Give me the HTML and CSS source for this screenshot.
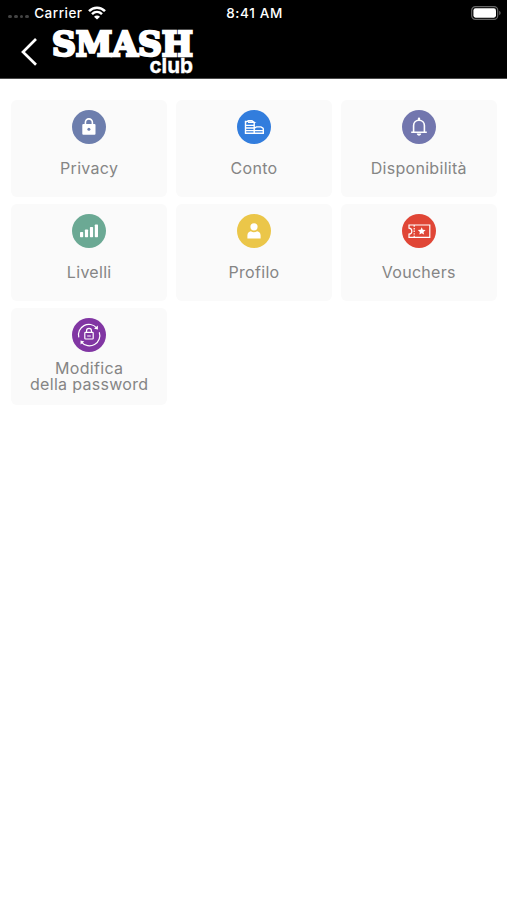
FILE: index.html
```html
<!DOCTYPE html>
<html lang="it">
<head>
<meta charset="utf-8">
<title>Smash Club</title>
<link rel="stylesheet" href="styles.css">
</head>
<body>
<header class="header">
  <div class="status">
    <div class="carrier">
      <span class="dots"><i></i><i></i><i></i><i></i></span>
      <span>Carrier</span>
      <svg class="wifi" width="18" height="14" viewBox="0 0 18 14" fill="none" stroke="#fff" stroke-width="2.5"><path d="M1 5.1C5.5.5 12.5.5 17 5.1M4 8.2c2.9-2.8 7.1-2.8 10 0"/><path d="M9 13.6 6 10.7c1.7-1.6 4.3-1.6 6 0z" fill="#fff" stroke="none"/></svg>
    </div>
    <time class="clock">8:41 AM</time>
    <svg class="battery" width="30" height="14" viewBox="0 0 30 14"><rect x=".7" y=".7" width="26" height="12.6" rx="3.6" fill="none" stroke="#666" stroke-width="1.2"/><rect x="2.4" y="2.3" width="22.6" height="9.4" rx="2.1" fill="#fff"/><path d="M28.3 4.8c1.7.7 1.7 3.7 0 4.4z" fill="#777"/></svg>
  </div>
  <div class="nav">
    <svg class="back" width="18" height="28" viewBox="0 0 18 28" fill="none" stroke="#fff" stroke-width="2.7"><path d="M16 1 3 14l13 12.7"/></svg>
    <svg class="logo" width="144" height="48" viewBox="0 0 144 48">
      <text class="smash" x="1" y="25.8" textLength="141" lengthAdjust="spacingAndGlyphs">SMASH</text>
      <text class="club" x="98.5" y="43.4" textLength="43.5" lengthAdjust="spacingAndGlyphs">club</text>
    </svg>
  </div>
</header>
<main class="grid">
  <a class="card">
    <svg class="icon" viewBox="0 0 34 34"><circle cx="17" cy="17" r="17" fill="#6d7ead"/><rect x="10.3" y="14" width="13.2" height="10.8" rx="1" fill="#fff"/><path d="M13.4 14.5v-2.1a3.5 3.5 0 0 1 7 0v2.1" fill="none" stroke="#fff" stroke-width="1.6"/><circle cx="16.9" cy="19.2" r="1.5" fill="#6d7ead"/></svg>
    <span class="label">Privacy</span>
  </a>
  <a class="card">
    <svg class="icon" viewBox="0 0 34 34"><circle cx="17" cy="17" r="17" fill="#327ddd"/><g fill="none" stroke="#fff" stroke-width="1.4"><path d="M8.5 10.8v12.4h17.8v-5M17.2 12v11M8.5 12.2l3-1.4h3.4l2.3 1.6H11M8.5 15.4h8.5M8.5 18h8.5M8.5 20.6h17.8M17.3 18.2l2.2-1.3h4.4l2.4 1.5"/></g></svg>
    <span class="label">Conto</span>
  </a>
  <a class="card">
    <svg class="icon" viewBox="0 0 34 34"><circle cx="17" cy="17" r="17" fill="#7276ae"/><path d="M9.2 22.2h15.6M11.6 22v-6.4c0-3 2.2-5.3 5.4-5.3s5.4 2.3 5.4 5.3V22" fill="none" stroke="#fff" stroke-width="1.6"/><path d="M15.8 10V8.8a1.2 1.2 0 0 1 2.4 0V10zM14.8 23.6h4.4c0 2.7-4.4 2.7-4.4 0z" fill="#fff"/></svg>
    <span class="label">Disponibilità</span>
  </a>
  <a class="card">
    <svg class="icon" viewBox="0 0 34 34"><circle cx="17" cy="17" r="17" fill="#6ba994"/><g fill="#fff"><rect x="8" y="18.1" width="3.2" height="5.2" rx=".7"/><rect x="12.9" y="15.6" width="3.2" height="7.7" rx=".7"/><rect x="17.9" y="13" width="3.2" height="10.3" rx=".7"/><rect x="22.8" y="10.5" width="3.2" height="12.8" rx=".7"/></g></svg>
    <span class="label">Livelli</span>
  </a>
  <a class="card">
    <svg class="icon" viewBox="0 0 34 34"><circle cx="17" cy="17" r="17" fill="#ebc649"/><circle cx="17" cy="12.8" r="3.6" fill="#fff"/><path d="M10.4 24.6v-3.2c0-2.6 1.6-3.8 3.5-4.1 1.8 1.2 4.4 1.2 6.2 0 1.9.3 3.5 1.5 3.5 4.1v3.2z" fill="#fff"/></svg>
    <span class="label">Profilo</span>
  </a>
  <a class="card">
    <svg class="icon" viewBox="0 0 34 34"><circle cx="17" cy="17" r="17" fill="#e04636"/><path d="M7 11h20.8v12.3H7v-3.2c3.8-.3 3.8-5.6 0-5.9zM12.2 11.3v1.4M12.2 14v1.4M12.2 16.6V18M12.2 19.2v1.4M12.2 21.8v1.4" fill="none" stroke="#fff" stroke-width="1.2"/><path d="m19.7 13.2 1.1 2.6 2.8.2-2.1 1.9.6 2.7-2.4-1.4-2.4 1.4.6-2.7-2.1-1.9 2.8-.2z" fill="#fff"/></svg>
    <span class="label">Vouchers</span>
  </a>
  <a class="card">
    <svg class="icon" viewBox="0 0 34 34"><circle cx="17" cy="17" r="17" fill="#8136a3"/><g fill="none" stroke="#fff" stroke-width="1.2"><path d="M6.8 19.3A10.4 10.4 0 0 1 24.6 9.8M27.3 14.2A10.4 10.4 0 0 1 9.6 24.3"/><rect x="12.8" y="14.4" width="8.4" height="6.6" rx=".8"/><path d="M14.5 14.4v-1.5a2.5 2.5 0 0 1 5 0v1.5M15.2 18h3.6"/></g><path d="m25.8 7.4.2 4-3.9-.6zM8.6 26.6l-.1-4 3.8.8z" fill="#fff"/></svg>
    <span class="label label-two">Modifica<br>della password</span>
  </a>
</main>
</body>
</html>
```

FILE: styles.css
```css
* { box-sizing: border-box; }
body { margin: 0; background: #fff; font-family: Inter, "Liberation Sans", sans-serif; }
.header { height: 79px; background: #000; color: #fff; border-bottom: 1px solid #4a4a4a; }
.status { display: grid; grid-template-columns: 1fr auto 1fr; align-items: center; height: 26px; padding: 0 6px 0 8px; font-size: 13.5px; font-weight: 500; letter-spacing: .5px; }
.clock { letter-spacing: .65px; }
.carrier { display: flex; align-items: center; gap: 5px; }
.dots { display: flex; gap: 2px; padding-top: 7px; }
.dots i { width: 3.8px; height: 3.8px; border-radius: 50%; background: #444; }
.battery { justify-self: end; }
.nav { display: flex; align-items: flex-start; padding-left: 20px; }
.back { margin-top: 12px; }
.logo { margin: 4px 0 0 13px; overflow: visible; }
.smash { font: bold 33px "DejaVu Serif", serif; fill: #fff; stroke: #fff; stroke-width: 2.6px; }
.club { font: 700 20.5px Inter, sans-serif; fill: #fff; stroke: #fff; stroke-width: .3px; }
.grid { display: grid; grid-template-columns: repeat(3, 156px); grid-auto-rows: 97px; gap: 7px 8.8px; padding: 21px 0 0 11.2px; }
.card { display: flex; flex-direction: column; align-items: center; padding-top: 10px; border-radius: 6px; background: #fafafa; color: #858585; }
.icon { width: 34px; height: 34px; flex: none; }
.label { margin-top: 14px; font-size: 16px; line-height: 20px; letter-spacing: .3px; text-align: center; white-space: nowrap; }
.label-two { margin-top: 8px; line-height: 16px; }
```
